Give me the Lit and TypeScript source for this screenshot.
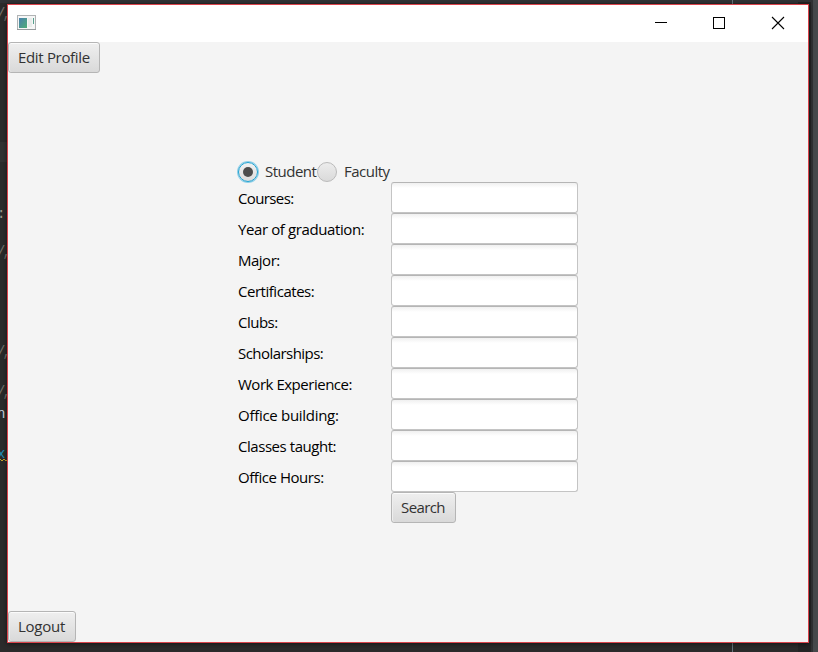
import { LitElement, html, css, svg } from "lit";
import { customElement, property, state } from "lit/decorators.js";
import { classMap } from "lit/directives/class-map.js";
import { styleMap } from "lit/directives/style-map.js";

@customElement("fx-button")
class FxButton extends LitElement {
  static styles = css`
    :host { display: block; }
    button {
      box-sizing: border-box; width: 100%; height: 31px; padding: 0 0 1px 9px;
      border: 1px solid #b5b5b5; border-radius: 3px;
      background: linear-gradient(#efefef, #d9d9d9);
      box-shadow: inset 0 1px 0 #fbfbfb, inset 1px 0 0 #eeeeee;
      font: inherit; letter-spacing: inherit; color: #323232; white-space: nowrap;
      display: flex; align-items: center; justify-content: flex-start;
    }
  `;
  render() { return html`<button><slot></slot></button>`; }
}

@customElement("fx-radio")
class FxRadio extends LitElement {
  @property({ type: Boolean }) checked = false;
  static styles = css`
    :host { display: flex; align-items: center; height: 20px; gap: 7px; color: #323232; white-space: nowrap; }
    .ring {
      box-sizing: border-box; width: 20px; height: 20px; flex: none; border-radius: 50%;
      border: 1px solid #bababa; background: linear-gradient(#ececec, #dadada);
      display: grid; place-items: center;
    }
    .on { border: 1.5px solid #1ba1d2; background: linear-gradient(#f2f2f2, #dcdcdc); box-shadow: 0 0 0 1px #8fcfe8; }
    .dot { width: 10px; height: 10px; border-radius: 50%; background: #4d4d4d; }
    .text { padding-bottom: 2px; }
  `;
  render() {
    return html`<span class=${classMap({ ring: true, on: this.checked })}>
      ${this.checked ? html`<span class="dot"></span>` : ""}</span><span class="text"><slot></slot></span>`;
  }
}

interface Field { label: string; tracking: number; }

@customElement("app-root")
class AppRoot extends LitElement {
  @state() private role = "student";
  private fields: Field[] = [
    { label: "Courses:", tracking: -0.62 },
    { label: "Year of graduation:", tracking: -0.39 },
    { label: "Major:", tracking: -0.5 },
    { label: "Certificates:", tracking: -0.47 },
    { label: "Clubs:", tracking: -0.5 },
    { label: "Scholarships:", tracking: -0.55 },
    { label: "Work Experience:", tracking: -0.48 },
    { label: "Office building:", tracking: -0.29 },
    { label: "Classes taught:", tracking: -0.45 },
    { label: "Office Hours:", tracking: -0.45 },
  ];

  static styles = css`
    :host {
      display: block; position: relative; box-sizing: border-box; width: 818px; height: 652px;
      padding: 4px 0 0 7px; overflow: hidden; background: #2b2b2b;
      font: 15px/20px "Open Sans", "Noto Sans", sans-serif; letter-spacing: -0.5px;
    }
    .backdrop { position: absolute; left: 0; top: 0; display: block; }
    .code { font: 14px "Liberation Mono", monospace; letter-spacing: -3px; }
    .window {
      position: relative; box-sizing: border-box; width: 802px; height: 639px;
      border: 1px solid #d9434b; background: #f4f4f4; display: flex; flex-direction: column;
      box-shadow: 0 1px 5px #0008;
    }
    .title { height: 37px; flex: none; background: #fff; display: flex; align-items: center; justify-content: space-between; }
    .app-icon { margin: 0 0 1px 9px; display: block; }
    .controls { display: block; }
    .body { flex: 1; display: flex; flex-direction: column; align-items: flex-start; }
    .edit { width: 92px; letter-spacing: -0.33px; }
    .logout { width: 68px; letter-spacing: -0.25px; }
    .search { grid-column: 2; width: 65px; letter-spacing: -0.6px; }
    .form {
      margin: 89px 0 auto 230px; display: grid; grid-template-columns: 153px 187px;
      grid-template-rows: 20px; grid-auto-rows: 31px; align-items: center;
    }
    .roles { grid-column: 1 / 3; display: flex; }
    .student { width: 79px; }
    .label { color: #000; white-space: nowrap; }
    .field {
      box-sizing: border-box; width: 187px; height: 31px; border: 1px solid #c4c4c4;
      border-top-color: #b5b5b5; border-radius: 3px; outline: 0;
      background: linear-gradient(#f0f0f0, #fff 5px); padding: 4px 8px; font: inherit;
    }
  `;

  private backdrop() {
    const bits: [number, number, string, string][] = [
      [-3, 18, "/,", "#77736c"], [-3, 218, ":", "#9b9b90"], [-3, 256, "/,", "#77736c"],
      [-3, 356, "/,", "#77736c"], [-3, 396, "/,", "#77736c"], [-3, 418, "n", "#c8d3df"], [-3, 458, "x", "#218cb4"],
    ];
    return html`<svg class="backdrop" width="818" height="652">
      <rect width="818" height="652" fill="#2b2b2b"></rect>
      <rect width="818" height="3" fill="#303336"></rect>
      <rect y="142" width="8" height="20" fill="#323232"></rect>
      <rect x="732" width="1" height="652" fill="#66747c"></rect>
      <rect x="798" y="2" width="14" height="650" fill="#242525"></rect>
      <rect x="811" width="2" height="652" fill="#303234"></rect>
      <rect x="813" width="5" height="652" fill="#45494b"></rect>
      ${bits.map(([x, y, t, c]) => svg`<text class="code" x=${x} y=${y} fill=${c}>${t}</text>`)}
      <path d="M0 459l2 2 2-2 2 2 2-2" stroke="#c8a52a" fill="none"></path>
    </svg>`;
  }

  render() {
    return html`
      ${this.backdrop()}
      <div class="window">
        <div class="title">
          <svg class="app-icon" width="20" height="16" viewBox="0 0 20 16">
            <defs><linearGradient id="g" x2="1" y2="1"><stop stop-color="#4a7fae"></stop><stop offset="1" stop-color="#4eae76"></stop></linearGradient></defs>
            <rect x=".5" y=".5" width="18" height="14" fill="#f6f6f6" stroke="#b0b3b4"></rect>
            <path d="M0 14.5h19" stroke="#969b9d"></path>
            <rect x="2" y="3" width="8" height="10" fill="url(#g)"></rect>
            <path d="M11 3h4v9h-4z" fill="#e8ecea"></path>
            <path d="M16.5 3v6" stroke="#57a18e"></path>
          </svg>
          <svg class="controls" width="160" height="37" fill="none" stroke="#000" shape-rendering="crispEdges">
            <path d="M7 17.5h12"></path>
            <rect x="65.5" y="12.5" width="11" height="11"></rect>
            <path d="M124 12l12 12M136 12l-12 12" shape-rendering="auto" stroke-width="1.1"></path>
          </svg>
        </div>
        <div class="body">
          <fx-button class="edit">Edit Profile</fx-button>
          <div class="form">
            <div class="roles">
              <fx-radio class="student" ?checked=${this.role === "student"} @click=${() => (this.role = "student")}>Student</fx-radio>
              <fx-radio ?checked=${this.role === "faculty"} @click=${() => (this.role = "faculty")}>Faculty</fx-radio>
            </div>
            ${this.fields.map((f) => html`
              <span class="label" style=${styleMap({ letterSpacing: `${f.tracking}px` })}>${f.label}</span>
              <input class="field" aria-label=${f.label} />`)}
            <fx-button class="search">Search</fx-button>
          </div>
          <fx-button class="logout">Logout</fx-button>
        </div>
      </div>`;
  }
}
